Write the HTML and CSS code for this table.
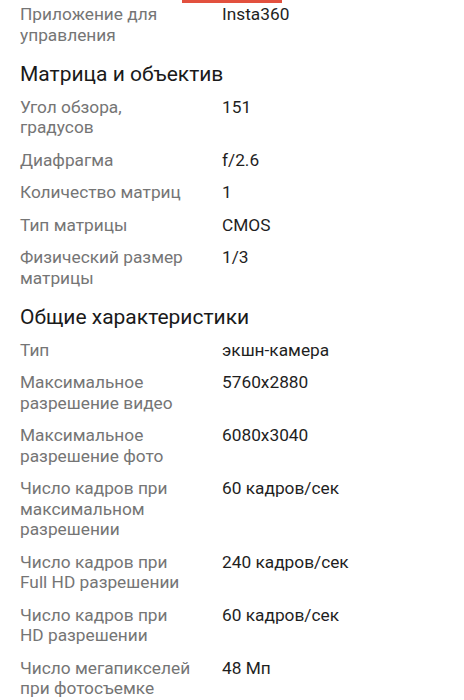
FILE: index.html
```html
<!DOCTYPE html>
<html lang="ru">
<head>
<meta charset="utf-8">
<link rel="stylesheet" href="styles.css">
</head>
<body>
<div class="tab-indicator"></div>
<div class="specs">
  <div class="row"><div class="label">Приложение для управления</div><div class="value">Insta360</div></div>

  <h2 class="heading">Матрица и объектив</h2>
  <div class="row"><div class="label">Угол обзора, градусов</div><div class="value">151</div></div>
  <div class="row"><div class="label">Диафрагма</div><div class="value">f/2.6</div></div>
  <div class="row"><div class="label">Количество матриц</div><div class="value">1</div></div>
  <div class="row"><div class="label">Тип матрицы</div><div class="value">CMOS</div></div>
  <div class="row"><div class="label">Физический размер матрицы</div><div class="value">1/3</div></div>

  <h2 class="heading">Общие характеристики</h2>
  <div class="row"><div class="label">Тип</div><div class="value">экшн-камера</div></div>
  <div class="row"><div class="label">Максимальное разрешение видео</div><div class="value">5760x2880</div></div>
  <div class="row"><div class="label">Максимальное разрешение фото</div><div class="value">6080x3040</div></div>
  <div class="row"><div class="label">Число кадров при максимальном разрешении</div><div class="value">60 кадров/сек</div></div>
  <div class="row"><div class="label">Число кадров при Full HD разрешении</div><div class="value">240 кадров/сек</div></div>
  <div class="row"><div class="label">Число кадров при HD разрешении</div><div class="value">60 кадров/сек</div></div>
  <div class="row"><div class="label">Число мегапикселей при фотосъемке</div><div class="value">48 Мп</div></div>
</div>
</body>
</html>
```

FILE: styles.css
```css
html, body {
  margin: 0;
  padding: 0;
  background: #ffffff;
}
body {
  font-family: Roboto, "Noto Sans", sans-serif;
  width: 464px;
  overflow: hidden;
}
.tab-indicator {
  width: 100px;
  height: 3px;
  margin-left: 182px;
  background: #e2503e;
}
.specs {
  padding: 1px 20px 0 20px;
  display: flex;
  flex-direction: column;
}
.row {
  display: grid;
  grid-template-columns: 172px 1fr;
  column-gap: 30px;
  font-size: 17.3px;
  line-height: 20.5px;
  margin-bottom: 12px;
}
.label {
  color: #757575;
}
.value {
  color: #1f1f1f;
}
.heading {
  margin: 5px 0 10.5px 0;
  font-size: 21px;
  line-height: 24px;
  font-weight: 400;
  color: #1a1a1a;
}
```
